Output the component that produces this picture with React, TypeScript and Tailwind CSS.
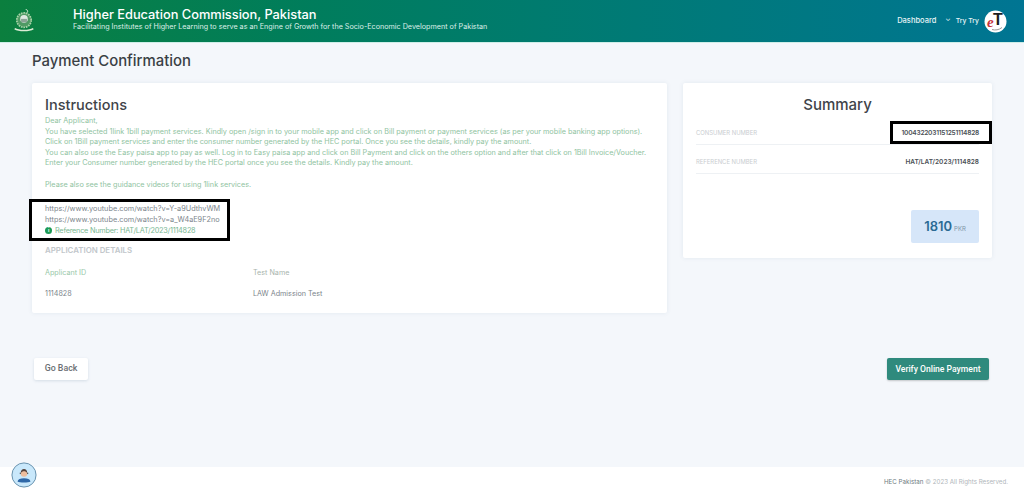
const Emblem = () => (
    <svg width="22" height="28" viewBox="0 0 26 30" fill="none">
        <path d="M15 1.500a2.200 2.200 0 1 1-1.500 3.500" stroke="#dcecd6" strokeWidth="1" />
        <circle cx="13" cy="14" r="8.500" fill="#4f9a64" />
        <circle cx="13" cy="14" r="8.500" stroke="#a9d3a8" strokeWidth="2" strokeDasharray="2 1" />
        <circle cx="13" cy="12.500" r="4.500" fill="#dfe9e2" />
        <rect x="9.500" y="12.500" width="7" height="4" fill="#8aa396" />
        <path d="M2 24c5 3 17 3 22 0" stroke="#dcecd6" strokeWidth="2" />
    </svg>
);

const Avatar = () => (
    <svg width="23" height="23" viewBox="0 0 23 23">
        <circle cx="11.500" cy="11.500" r="11" fill="#fff" />
        <text x="3" y="17" fontFamily="'Liberation Serif', serif" fontStyle="italic" fontWeight="700" fontSize="15" fill="#c8323a">e</text>
        <text x="9" y="15" fontFamily="'Liberation Sans', sans-serif" fontWeight="700" fontSize="16" fill="#1d1d1d">T</text>
        <path d="M8 19.500c3 1 7 .5 10-2" stroke="#9a9a9a" strokeWidth="1" fill="none" />
    </svg>
);

const AgentIcon = () => (
    <svg width="26" height="26" viewBox="0 0 28 28">
        <circle cx="14" cy="14" r="13" fill="#c9e8fb" stroke="#5f8aa8" strokeWidth="1" />
        <path d="M7 21c.5-2.500 3-3.500 7-3.500s6.500 1 7 3.500c-2 1.500-12 1.500-14 0z" fill="#2f68a8" />
        <circle cx="14" cy="12.500" r="3.500" fill="#eebd9d" />
        <path d="M10.500 12c0-3 1.500-4.500 3.500-4.500s3.500 1.500 3.500 4.500c-1-1.500-2-2-3.500-2s-2.500.5-3.500 2z" fill="#54413a" />
        <path d="M10 13v-1.500M18 13v-1.500" stroke="#333" strokeWidth="1" />
    </svg>
);

export default function App() {
    return (
        <div className="relative flex min-h-[496px] flex-col bg-[#f4f7fb] font-['Inter',sans-serif]">
            {/* Header */}
            <header className="flex h-[43px] items-center border-b border-[#cfeee8] bg-gradient-to-r from-[#0b7f3e] to-[#007593] pl-[13px] pr-[17px]">
                <Emblem />
                <div className="ml-[38px] mb-[5px] flex-1 text-white">
                    <div className="text-[12.800px] font-medium leading-[15px]">Higher Education Commission, Pakistan</div>
                    <div className="text-[7.200px] leading-[9px] text-[#dcefe8]">
                        Facilitating Institutes of Higher Learning to serve as an Engine of Growth for the Socio-Economic Development of Pakistan
                    </div>
                </div>
                <span className="text-[7.500px] font-medium text-[#e6f4f6]">Dashboard</span>
                <span className="ml-[9px] mb-[3px] text-[7px] text-[#e6f4f6]">⌄</span>
                <span className="ml-[5px] mr-[5px] text-[6.800px] font-medium text-[#e6f4f6]">Try Try</span>
                <Avatar />
            </header>

            <main className="flex-1 px-[32px]">
                <h1 className="mt-[8px] text-[14.900px] font-medium leading-[20px] text-[#3a3f45]">Payment Confirmation</h1>

                <div className="mt-[12px] flex items-start gap-[16px]">
                    {/* Instructions */}
                    <section className="h-[230px] w-[635px] rounded-[2px] bg-white px-[13px] pt-[12px] shadow-[0_0_4px_rgba(90,120,150,0.12)]">
                        <h2 className="text-[14.500px] font-medium leading-[20px] text-[#3f4449]">Instructions</h2>
                        <div className="mt-[1px] text-[7.240px] leading-[10.600px] text-[#8fc3a1]">
                            <p>Dear Applicant,</p>
                            <p className="whitespace-nowrap">You have selected 1link 1bill payment services. Kindly open /sign in to your mobile app and click on Bill payment or payment services (as per your mobile banking app options).</p>
                            <p className="whitespace-nowrap">Click on 1Bill payment services and enter the consumer number generated by the HEC portal. Once you see the details, kindly pay the amount.</p>
                            <p className="whitespace-nowrap">You can also use the Easy paisa app to pay as well. Log in to Easy paisa app and click on Bill Payment and click on the others option and after that click on 1Bill Invoice/Voucher.</p>
                            <p className="whitespace-nowrap">Enter your Consumer number generated by the HEC portal once you see the details. Kindly pay the amount.</p>
                            <p className="mt-[11px]">Please also see the guidance videos for using 1link services.</p>
                        </div>
                        <div className="mt-[12px] text-[7.300px] leading-[11px] text-[#7c858c]">
                            <p>https://www.youtube.com/watch?v=Y-a9UdthvWM</p>
                            <p>https://www.youtube.com/watch?v=a_W4aE9F2no</p>
                        </div>
                        <div className="flex items-center gap-[3px] text-[7.300px] leading-[11px] tracking-[-0.23px] text-[#7ab893]">
                            <span className="flex h-[7px] w-[7px] items-center justify-center rounded-full bg-[#1c9a55] text-[5px] font-bold text-white">i</span>
                            Reference Number: HAT/LAT/2023/1114828
                        </div>
                        <h3 className="mt-[8px] text-[7.900px] font-semibold leading-[12px] text-[#c2c7cb]">APPLICATION DETAILS</h3>
                        <div className="mt-[11px] grid w-[370px] grid-cols-[208px_1fr] gap-y-[10px] text-[7.200px] leading-[11px]">
                            <span className="text-[#98c8a9]">Applicant ID</span>
                            <span className="text-[#a9b4ad]">Test Name</span>
                            <span className="text-[#7c858c]">1114828</span>
                            <span className="text-[#7c858c]">LAW Admission Test</span>
                        </div>
                    </section>

                    {/* Summary */}
                    <section className="h-[175px] w-[309px] rounded-[2px] bg-white px-[13px] pt-[12px] shadow-[0_0_4px_rgba(90,120,150,0.12)]">
                        <h2 className="text-center text-[15px] font-medium leading-[20px] text-[#3f4449]">Summary</h2>
                        <div className="mt-[1px] flex h-[29px] items-center justify-between border-b border-[#eef1f4] pt-[7px]">
                            <span className="text-[5.900px] text-[#c9cdd0]">CONSUMER NUMBER</span>
                            <span className="text-[6.600px] font-semibold tracking-[-0.25px] text-[#4a4f55]">1004322031151251114828</span>
                        </div>
                        <div className="flex h-[29px] items-center justify-between border-b border-[#eef1f4] pt-[7px]">
                            <span className="text-[5.900px] text-[#c9cdd0]">REFERENCE NUMBER</span>
                            <span className="text-[6.500px] font-semibold text-[#4a4f55]">HAT/LAT/2023/1114828</span>
                        </div>
                        <div className="mt-[36px] flex justify-end">
                            <div className="flex h-[33px] w-[68px] items-center justify-center gap-[2px] rounded-[2px] bg-[#d6e6f9]">
                                <span className="text-[13px] font-semibold text-[#2b6a94]">1810</span>
                                <span className="mt-[3px] text-[6px] text-[#7c93a6]">PKR</span>
                            </div>
                        </div>
                    </section>
                </div>

                <div className="mt-[45px] flex items-center justify-between pl-[2px] pr-[3px]">
                    <button className="h-[22px] w-[54px] rounded-[2px] bg-white font-['Roboto',sans-serif] text-[8.800px] font-medium text-[#6b6f73] shadow-[0_1px_3px_rgba(90,120,150,0.2)]">Go Back</button>
                    <button className="h-[22px] w-[102px] rounded-[2px] bg-[#2f8a7d] font-['Roboto',sans-serif] text-[8.600px] font-medium text-white shadow-[0_1px_2px_rgba(0,0,0,0.2)]">Verify Online Payment</button>
                </div>
            </main>

            {/* Footer */}
            <footer className="flex h-[29px] items-center justify-end bg-white pr-[16px] text-[6.200px]">
                <span className="text-[#6d7a80]">HEC Pakistan</span>
                <span className="ml-[2px] text-[#b0b6ba]">© 2023 All Rights Reserved.</span>
            </footer>

            {/* Floating support button */}
            <div className="absolute bottom-[8px] left-[11px]"><AgentIcon /></div>

            {/* Black annotation boxes drawn over the screenshot */}
            <div className="absolute left-[29px] top-[199px] h-[42px] w-[201px] border-[3px] border-black" />
            <div className="absolute left-[890px] top-[121px] h-[23px] w-[102px] border-[3px] border-black" />
        </div>
    );
}
